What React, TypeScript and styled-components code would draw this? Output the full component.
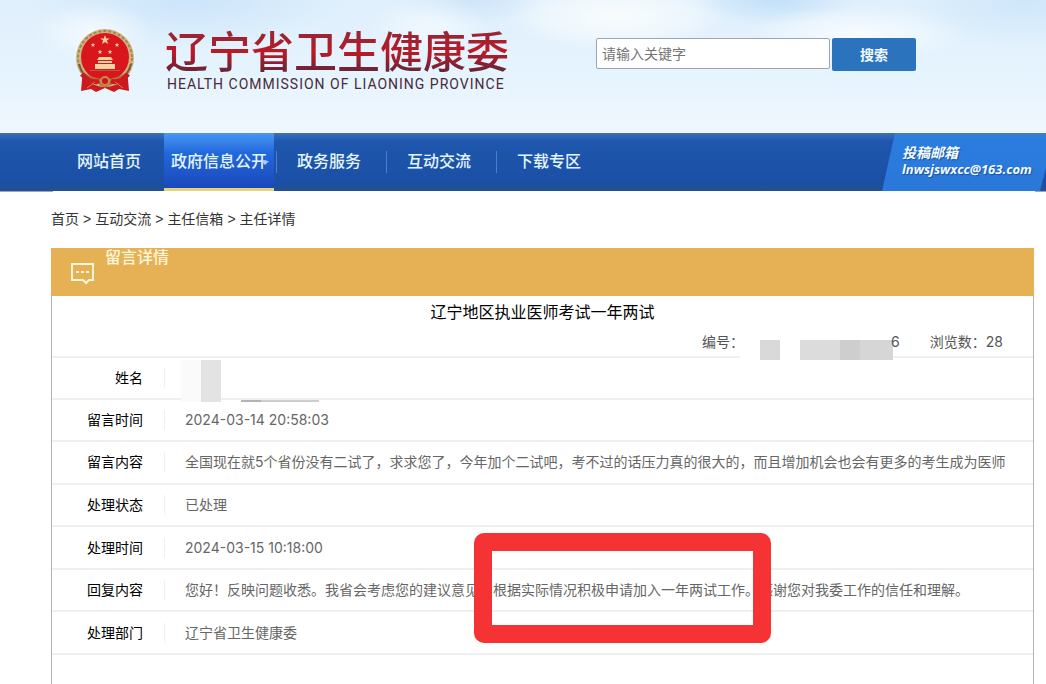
import React from "react";
import styled, { createGlobalStyle } from "styled-components";

const GlobalStyle = createGlobalStyle`
  * { box-sizing: border-box; }
  body {
    margin: 0;
    background: #fff;
    color: #333;
    font-family: Inter, "Noto Sans CJK SC", sans-serif;
    font-size: 14px;
    line-height: 20px;
  }
`;

const Page = styled.div`
  min-height: 100vh;
  display: flex;
  flex-direction: column;
  overflow: hidden;
`;

const Header = styled.header`
  display: flex;
  align-items: flex-start;
  gap: 87px;
  padding: 26px 76px 0;
  height: 133px;
  background:
    radial-gradient(ellipse 60px 30px at 9% 24%, rgba(246, 251, 254, 0.9), transparent),
    radial-gradient(ellipse 110px 34px at 59% 12%, rgba(248, 252, 253, 1), rgba(248, 252, 253, 0.6) 60%, transparent),
    radial-gradient(ellipse 110px 30px at 82% 26%, rgba(248, 252, 254, 1), transparent),
    radial-gradient(ellipse 60px 30px at 41% 20%, rgba(244, 250, 254, 0.8), transparent),
    radial-gradient(ellipse 80px 26px at 74% 0%, rgba(190, 222, 249, 0.9), transparent),
    radial-gradient(ellipse 70px 26px at 45% 0%, rgba(205, 228, 248, 0.9), transparent),
    radial-gradient(ellipse 160px 50px at 18% 0%, rgba(202, 228, 250, 0.9), transparent),
    radial-gradient(ellipse 120px 50px at 98% 0%, rgba(205, 229, 250, 0.9), transparent),
    linear-gradient(#dfeffc, #e6f4fe 60%, #f0f8fe);
`;

const Brand = styled.a`
  display: flex;
  align-items: flex-start;
  gap: 31px;
  color: inherit;
  text-decoration: none;
  flex: none;
`;

const BrandText = styled.span`
  display: flex;
  flex-direction: column;
`;

const BrandName = styled.span`
  font-size: 43px;
  line-height: 52px;
  font-weight: 500;
  color: transparent;
  background: linear-gradient(#9c2433 20%, #bb1a26 50%, #6c2536 85%);
  background-clip: text;
  -webkit-background-clip: text;
`;

const BrandSub = styled.span`
  font-family: Roboto, sans-serif;
  font-size: 14px;
  line-height: 12px;
  letter-spacing: 1px;
  color: #4a2a38;
  padding-left: 2px;
`;

const Search = styled.form`
  display: flex;
  gap: 2px;
  margin-top: 12px;
`;

const SearchInput = styled.input`
  width: 234px;
  height: 31px;
  padding: 0 5px;
  border: 1px solid #9aa7b3;
  border-radius: 2px;
  background: #fff;
  font: inherit;
  &::placeholder { color: #757575; opacity: 1; }
`;

const SearchButton = styled.button`
  width: 84px;
  height: 33px;
  border: 0;
  border-radius: 2px;
  background: #2c73bd;
  color: #f0faff;
  font: inherit;
  font-weight: 700;
`;

const Nav = styled.nav`
  display: flex;
  height: 58px;
  padding-left: 54px;
  background: linear-gradient(#3a72ba, #1f57ae 8px, #1a4fa4 50px, #24508f);
`;

const NavLink = styled.a<{ $active?: boolean; $divider?: boolean }>`
  width: 110px;
  display: flex;
  align-items: center;
  justify-content: center;
  position: relative;
  font-size: 16px;
  font-weight: 500;
  color: #e3f6ff;
  text-decoration: none;
  white-space: nowrap;
  background: ${(p) => (p.$active ? "linear-gradient(#4a98f2, #2268dc 20px, #1b48bb)" : "none")};
  border-bottom: ${(p) => (p.$active ? "3px solid #e2d47c" : "0")};
  padding-bottom: ${(p) => (p.$active ? "0" : "3px")};
  &::after {
    content: "";
    display: ${(p) => (p.$divider ? "block" : "none")};
    position: absolute;
    right: -3px;
    top: 18px;
    height: 22px;
    border-right: 1px solid #4b7fcb;
  }
`;

const Caret = styled.span`
  position: absolute;
  right: 5px;
  top: 28px;
  border: 4px solid transparent;
  border-top-color: #a9cdf8;
  border-bottom: 0;
`;

const Mail = styled.a`
  margin-left: auto;
  width: 164px;
  padding: 12px 0 0 20px;
  background: linear-gradient(#3a80cc, #2b7ce0 6px, #2a78d8);
  clip-path: polygon(13px 0, 100% 0, 100% 60%, 158px 100%, 0 100%);
  color: #f2fbff;
  font-family: "Open Sans", "Noto Sans CJK SC", sans-serif;
  font-size: 14px;
  line-height: 16px;
  font-weight: 700;
  font-style: italic;
  text-decoration: none;
  text-shadow: 1px 1px 1px #1b4f9c;
  display: flex;
  flex-direction: column;
`;

const MailAddress = styled.span`
  font-size: 13px;
`;

const Crumbs = styled.nav`
  padding: 18px 51px 19px;
  display: flex;
  gap: 4px;
  font-family: "Liberation Sans", "Noto Sans CJK SC", sans-serif;
  background:
    linear-gradient(#9aa3c0, #9aa3c0) left top / 53px 1px no-repeat,
    linear-gradient(#9aa3c0, #9aa3c0) right top / 11px 1px no-repeat;
  a { color: #333; text-decoration: none; }
`;

const Panel = styled.main`
  flex: 1;
  margin: 0 12px 0 51px;
  border: 1px solid #b5b5b5;
  border-top: 0;
  border-bottom: 0;
`;

const PanelHead = styled.div`
  display: flex;
  gap: 10px;
  height: 48px;
  margin: 0 -1px;
  padding-left: 19px;
  background: #e6b155;
  color: #fff6dc;
`;

const PanelIcon = styled.svg`
  margin-top: 14px;
`;

const PanelTitle = styled.h2`
  margin: 0;
  font-size: 16px;
  line-height: 18px;
  font-weight: 500;
`;

const Subject = styled.h1`
  margin: 0;
  padding: 5px 0 4px;
  text-align: center;
  font-size: 16px;
  line-height: 22px;
  font-weight: 400;
  color: #000;
`;

const Meta = styled.div`
  display: flex;
  justify-content: flex-end;
  gap: 30px;
  height: 31px;
  padding: 5px 30px 0;
  color: #555;
  border-bottom: 2px solid #efefef;
`;

const Record = styled.span`
  display: flex;
`;

const Redacted = styled.span`
  display: flex;
  gap: 20px;
  height: 20px;
  margin: 8px -2px 0 -4px;
  padding-left: 20px;
  background: #fff;
`;

const Block = styled.span<{ $w: number; $c?: string }>`
  width: ${(p) => p.$w}px;
  height: 100%;
  background: ${(p) => p.$c ?? "#d9d9d9"};
`;

const Details = styled.table`
  width: 100%;
  height: 297px;
  border-collapse: collapse;
  th, td { border-bottom: 2px solid #efefef; padding: 0; }
`;

const Label = styled.th`
  width: 113px;
  text-align: left;
  font-weight: 400;
  color: #000;
`;

const LabelText = styled.span`
  display: block;
  padding-right: 21px;
  text-align: right;
  border-right: 1px solid #f1f1f1;
`;

const Value = styled.td`
  color: #666;
`;

const ValueText = styled.span`
  display: block;
  padding-left: 20px;
`;

const NameMask = styled.span`
  display: flex;
  align-items: flex-end;
  gap: 20px;
  height: 42px;
  margin: -8px 0 -14px 16px;
`;

const MaskLine = styled.span`
  width: 78px;
  height: 2px;
  background: linear-gradient(90deg, #b3b3b3 20px, #cdcdcd 20px);
`;

const Marked = styled.mark`
  position: relative;
  background: none;
  color: inherit;
  &::after {
    content: "";
    position: absolute;
    inset: -48px -12px -45px -19px;
    border: 18px solid #f63334;
    border-radius: 10px;
  }
`;

const star = "M0-5 1.2-1.6 4.8-1.6 1.9.6 3 4.1 0 2-3 4.1-1.9.6-4.8-1.6-1.2-1.6Z";

const Emblem = () => (
  <svg width="58" height="68" viewBox="0 0 58 68" role="img" aria-label="国徽">
    <path d="M7 42 5 65l10-2 5 3 9-4 9 4 5-3 10 2-2-23Z" fill="#cb1a1e" />
    <circle cx="29" cy="32" r="29" fill="#cfb482" />
    <circle cx="29" cy="32" r="27" fill="none" stroke="#a58353" strokeWidth="2" strokeDasharray="3 2" />
    <path d="M3 38q3 12 14 18M55 38q-3 12-14 18" stroke="#7d5a35" strokeWidth="2" fill="none" />
    <circle cx="29" cy="31" r="24" fill="#d9161b" />
    <g fill="#f5d3a0">
      <path d={star} transform="translate(29 14)" />
      <path d={star} transform="translate(17 19) scale(.5)" />
      <path d={star} transform="translate(41 19) scale(.5)" />
      <path d={star} transform="translate(24 26) scale(.5)" />
      <path d={star} transform="translate(34 26) scale(.5)" />
      <path d="M23 31h12l2 3H21ZM22 35h14v2H22ZM19 38h20v5H19Z" />
      <path d="M14 44h30v1H14Z" fill="#b9573a" />
    </g>
    <path d="M7 46q10 7 22 7t22-7l-3 9q-6 3-12 2l-7 5-7-5q-6 1-12-2Z" fill="#b4713f" />
    <path d="M6 48q8 10 17 7m29-7q-8 10-17 7" stroke="#cb1a1e" strokeWidth="5" fill="none" />
    <path d="M11 62l8-6m28 6-8-6" stroke="#e07a4a" strokeWidth="1" fill="none" />
    <circle cx="29" cy="55" r="4" fill="#c9191d" stroke="#c98a52" strokeWidth="2" />
  </svg>
);

const navItems = [
  { text: "网站首页" },
  { text: "政府信息公开", active: true, divider: true },
  { text: "政务服务", divider: true },
  { text: "互动交流", divider: true },
  { text: "下载专区" },
];

const rows: { label: string; value: React.ReactNode }[] = [
  {
    label: "姓名",
    value: (
      <NameMask>
        <Block $w={40} $c="linear-gradient(90deg, #fafafa 20px, #e3e3e3 20px)" />
        <MaskLine />
      </NameMask>
    ),
  },
  { label: "留言时间", value: "2024-03-14 20:58:03" },
  {
    label: "留言内容",
    value: "全国现在就5个省份没有二试了，求求您了，今年加个二试吧，考不过的话压力真的很大的，而且增加机会也会有更多的考生成为医师",
  },
  { label: "处理状态", value: "已处理" },
  { label: "处理时间", value: "2024-03-15 10:18:00" },
  {
    label: "回复内容",
    value: (
      <>
        您好！反映问题收悉。我省会考虑您的建议意见，
        <Marked>根据实际情况积极申请加入一年两试工作。</Marked>
        感谢您对我委工作的信任和理解。
      </>
    ),
  },
  { label: "处理部门", value: "辽宁省卫生健康委" },
];

export default function App() {
  return (
    <Page>
      <GlobalStyle />
      <Header>
        <Brand href="#">
          <Emblem />
          <BrandText>
            <BrandName>辽宁省卫生健康委</BrandName>
            <BrandSub>HEALTH COMMISSION OF LIAONING PROVINCE</BrandSub>
          </BrandText>
        </Brand>
        <Search onSubmit={(e) => e.preventDefault()}>
          <SearchInput type="text" placeholder="请输入关键字" aria-label="请输入关键字" />
          <SearchButton type="submit">搜索</SearchButton>
        </Search>
      </Header>
      <Nav>
        {navItems.map((item) => (
          <NavLink key={item.text} href="#" $active={item.active} $divider={item.divider}>
            {item.text}
            {item.active && <Caret />}
          </NavLink>
        ))}
        <Mail href="mailto:lnwsjswxcc@163.com">
          <span>投稿邮箱</span>
          <MailAddress>lnwsjswxcc@163.com</MailAddress>
        </Mail>
      </Nav>
      <Crumbs>
        <a href="#">首页</a>&gt;<a href="#">互动交流</a>&gt;<a href="#">主任信箱</a>&gt;<a href="#">主任详情</a>
      </Crumbs>
      <Panel>
        <PanelHead>
          <PanelIcon width="25" height="23" viewBox="0 0 25 23" fill="none" stroke="currentColor" strokeWidth="2">
            <path d="M2 2h21v16h-4l-3 3-3-3H2Z" />
            <path d="M6 10h3m2 0h3m2 0h3" />
          </PanelIcon>
          <PanelTitle>留言详情</PanelTitle>
        </PanelHead>
        <Subject>辽宁地区执业医师考试一年两试</Subject>
        <Meta>
          <Record>
            编号：
            <Redacted>
              <Block $w={20} />
              <Block $w={93} $c="linear-gradient(90deg, #dcdcdc 40px, #cecece 40px, #cecece 60px, #d6d6d6 60px)" />
            </Redacted>
            6
          </Record>
          <span>浏览数：28</span>
        </Meta>
        <Details>
          <tbody>
            {rows.map((row) => (
              <tr key={row.label}>
                <Label scope="row">
                  <LabelText>{row.label}</LabelText>
                </Label>
                <Value>{row.label === "姓名" ? row.value : <ValueText>{row.value}</ValueText>}</Value>
              </tr>
            ))}
          </tbody>
        </Details>
      </Panel>
    </Page>
  );
}
